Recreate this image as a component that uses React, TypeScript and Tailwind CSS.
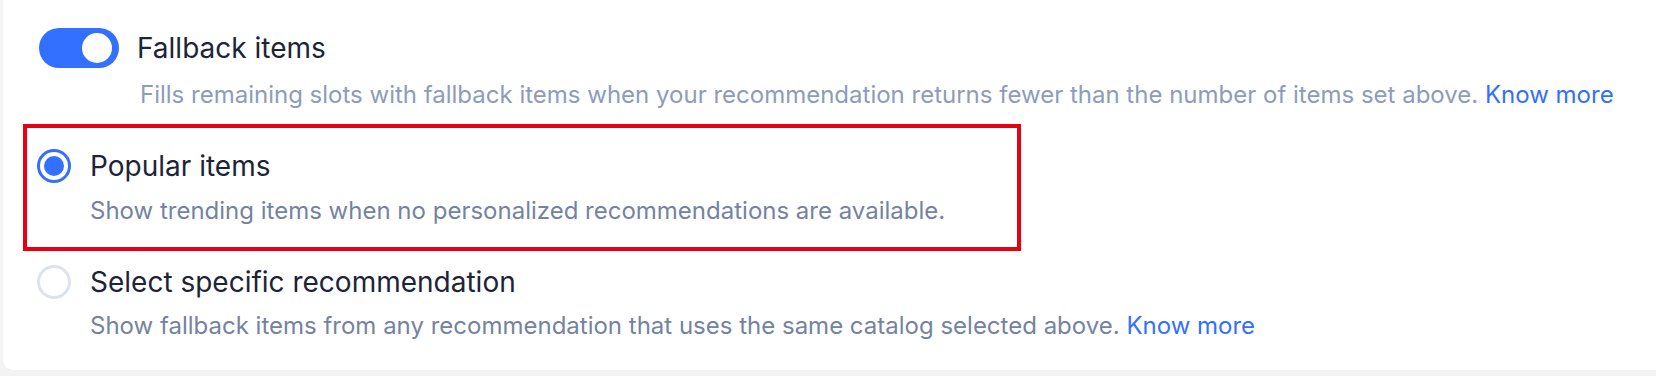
import { useState } from 'react'

const font = { fontFamily: 'Inter, "Noto Sans", sans-serif' }

function Toggle({ on, onChange }: { on: boolean; onChange: (v: boolean) => void }) {
  return (
    <button
      type="button"
      onClick={() => onChange(!on)}
      className={`relative flex h-[40px] w-[80px] shrink-0 items-center rounded-full px-[5px] ${
        on ? 'justify-end bg-[#3370ff]' : 'justify-start bg-[#d5dbe9]'
      }`}
    >
      <span className="mr-[2px] block h-[30px] w-[30px] rounded-full bg-white" />
    </button>
  )
}

function Radio({ checked }: { checked: boolean }) {
  return (
    <span
      className={`flex h-[34px] w-[34px] shrink-0 items-center justify-center rounded-full border-[3px] bg-white ${
        checked ? 'border-[#3370ff]' : 'border-[#dde2ef]'
      }`}
    >
      {checked && <span className="block h-[20px] w-[20px] rounded-full bg-[#3370ff]" />}
    </span>
  )
}

export default function App() {
  const [enabled, setEnabled] = useState(true)
  const [choice, setChoice] = useState<'popular' | 'specific'>('popular')

  return (
    <div className="h-[376px] w-full overflow-hidden bg-[#f3f3f4]" style={font}>
      <div className="ml-[3px] h-[370px] rounded-bl-[10px] bg-white">
        {/* Fallback toggle */}
        <div className="pl-[36px] pt-[28px]">
          <div className="flex items-center gap-[18px]">
            <Toggle on={enabled} onChange={setEnabled} />
            <span className="text-[28px] leading-[40px] text-[#1d2438]">Fallback items</span>
          </div>
          <p className="ml-[101px] mt-[11px] text-[24px] leading-[32px] text-[#8d9cba]">
            Fills remaining slots with fallback items when your recommendation returns fewer than the number of
            items set above. <a className="text-[#3370ff]">Know more</a>
          </p>
        </div>

        {/* Popular items (highlighted) */}
        <div
          onClick={() => setChoice('popular')}
          className="ml-[20px] mt-[13px] w-[998px] cursor-pointer border-4 border-[#e60012] pb-[20px] pl-[10px] pt-[20px]"
        >
          <div className="flex items-center gap-[19px]">
            <Radio checked={choice === 'popular'} />
            <span className="text-[28px] leading-[36px] text-[#1d2438]">Popular items</span>
          </div>
          <p className="ml-[53px] mt-[11px] text-[24px] leading-[32px] text-[#7483a1]">
            Show trending items when no personalized recommendations are available.
          </p>
        </div>

        {/* Select specific recommendation */}
        <div onClick={() => setChoice('specific')} className="ml-[34px] mt-[13px] cursor-pointer">
          <div className="flex items-center gap-[19px]">
            <Radio checked={choice === 'specific'} />
            <span className="text-[28px] leading-[36px] text-[#1d2438]">Select specific recommendation</span>
          </div>
          <p className="ml-[53px] mt-[10px] text-[24px] leading-[32px] text-[#7483a1]">
            Show fallback items from any recommendation that uses the same catalog selected above.{' '}
            <a className="text-[#3370ff]">Know more</a>
          </p>
        </div>
      </div>
    </div>
  )
}
